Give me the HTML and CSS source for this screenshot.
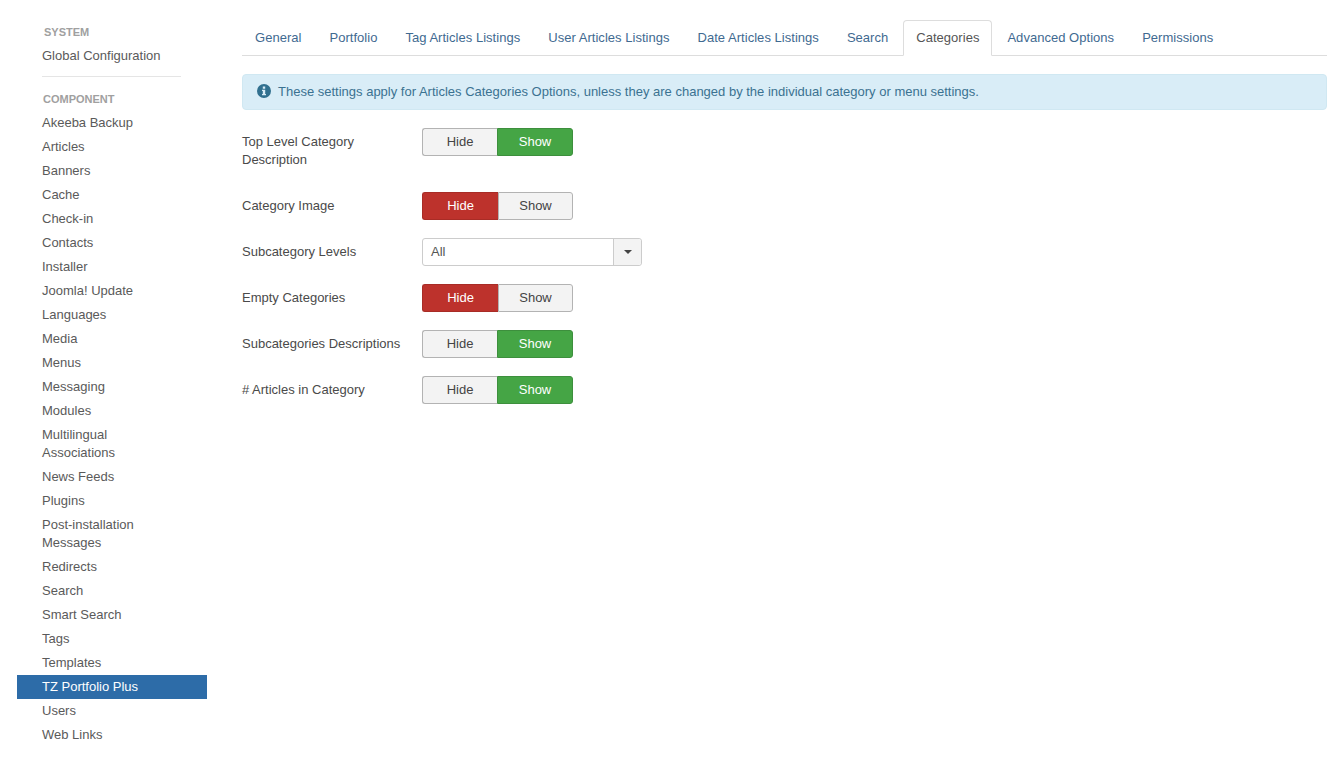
FILE: index.html
```html
<!DOCTYPE html>
<html>
<head>
	<title>Categories</title>
	<link rel="stylesheet" href="styles.css">
</head>
<body>
	<div class="page">
		<div class="sidebar">
			<ul class="menu">
				<li class="menu-head head-system">System</li>
				<li><a href="#">Global Configuration</a></li>
				<li class="divider"></li>
				<li class="menu-head">Component</li>
				<li><a href="#">Akeeba Backup</a></li>
				<li><a href="#">Articles</a></li>
				<li><a href="#">Banners</a></li>
				<li><a href="#">Cache</a></li>
				<li><a href="#">Check-in</a></li>
				<li><a href="#">Contacts</a></li>
				<li><a href="#">Installer</a></li>
				<li><a href="#">Joomla! Update</a></li>
				<li><a href="#">Languages</a></li>
				<li><a href="#">Media</a></li>
				<li><a href="#">Menus</a></li>
				<li><a href="#">Messaging</a></li>
				<li><a href="#">Modules</a></li>
				<li><a href="#">Multilingual<br>Associations</a></li>
				<li><a href="#">News Feeds</a></li>
				<li><a href="#">Plugins</a></li>
				<li><a href="#">Post-installation<br>Messages</a></li>
				<li><a href="#">Redirects</a></li>
				<li><a href="#">Search</a></li>
				<li><a href="#">Smart Search</a></li>
				<li><a href="#">Tags</a></li>
				<li><a href="#">Templates</a></li>
				<li class="active"><a href="#">TZ Portfolio Plus</a></li>
				<li><a href="#">Users</a></li>
				<li><a href="#">Web Links</a></li>
			</ul>
		</div>

		<div class="content">
			<ul class="tabs">
				<li><a href="#">General</a></li>
				<li><a href="#">Portfolio</a></li>
				<li><a href="#">Tag Articles Listings</a></li>
				<li><a href="#">User Articles Listings</a></li>
				<li><a href="#">Date Articles Listings</a></li>
				<li><a href="#">Search</a></li>
				<li class="active"><a href="#">Categories</a></li>
				<li><a href="#">Advanced Options</a></li>
				<li><a href="#">Permissions</a></li>
			</ul>

			<div class="alert">
				<svg class="alert-icon" width="14" height="14" viewBox="0 0 14 14">
					<path fill="#31708f" fill-rule="evenodd" d="M7 0a7 7 0 1 1 0 14A7 7 0 0 1 7 0zM5.8 2.6v2.1h2.4V2.6zM5 5.8v1.2h.8v3H5v1.3h4V10h-.8V5.8z"/>
				</svg>
				These settings apply for Articles Categories Options, unless they are changed by the individual category or menu settings.
			</div>

			<div class="row">
				<label class="row-label">Top Level Category<br>Description</label>
				<div class="toggle">
					<span class="btn">Hide</span>
					<span class="btn on-green">Show</span>
				</div>
			</div>
			<div class="row">
				<label class="row-label">Category Image</label>
				<div class="toggle">
					<span class="btn on-red">Hide</span>
					<span class="btn">Show</span>
				</div>
			</div>
			<div class="row">
				<label class="row-label">Subcategory Levels</label>
				<div class="select">
					<span class="select-value">All</span>
					<span class="select-arrow"><b></b></span>
				</div>
			</div>
			<div class="row">
				<label class="row-label">Empty Categories</label>
				<div class="toggle">
					<span class="btn on-red">Hide</span>
					<span class="btn">Show</span>
				</div>
			</div>
			<div class="row">
				<label class="row-label">Subcategories Descriptions</label>
				<div class="toggle">
					<span class="btn">Hide</span>
					<span class="btn on-green">Show</span>
				</div>
			</div>
			<div class="row">
				<label class="row-label"># Articles in Category</label>
				<div class="toggle">
					<span class="btn">Hide</span>
					<span class="btn on-green">Show</span>
				</div>
			</div>
		</div>
	</div>
</body>
</html>
```

FILE: styles.css
```css
body{
	margin: 0;
	background: #fff;
	font-family: "Liberation Sans", Arial, sans-serif;
	font-size: 13px;
	line-height: 18px;
	color: #515151;
}

a{
	text-decoration: none;
}

.page{
	display: flex;
	align-items: flex-start;
	padding: 20px 16px 0 17px;
}

/* sidebar */
.sidebar{
	width: 190px;
	flex: none;
	margin-right: 35px;
}

.menu{
	list-style: none;
	margin: 0;
	padding: 0;
}

.menu li a{
	display: block;
	padding: 3px 10px 3px 25px;
	color: #5a5a5a;
}

.menu li.active a{
	background: #2d6ca8;
	color: #fff;
}

.menu-head{
	padding: 3px 0 3px 26px;
	font-size: 11px;
	font-weight: bold;
	text-transform: uppercase;
	color: #a0a0a0;
}

.head-system{
	padding-left: 27px;
}

.divider{
	width: 139px;
	height: 1px;
	margin: 8px 0 10px 25px;
	background: #e5e5e5;
}

/* tabs */
.content{
	flex: 1;
}

.tabs{
	display: flex;
	list-style: none;
	margin: 0 0 18px;
	padding: 0;
	border-bottom: 1px solid #ddd;
}

.tabs li{
	margin: 0 2px -1px 0;
}

.tabs a{
	display: block;
	padding: 8px 12px;
	border: 1px solid transparent;
	border-radius: 4px 4px 0 0;
	color: #3f6a91;
	letter-spacing: .03px;
}

.tabs .active a{
	border-color: #ddd #ddd #fff;
	background: #fff;
	color: #555;
}

/* alert */
.alert{
	display: flex;
	align-items: center;
	height: 34px;
	margin-bottom: 18px;
	padding-left: 14px;
	border: 1px solid #d0e8f2;
	border-radius: 4px;
	background: #d9edf7;
	color: #3b7291;
}

.alert-icon{
	margin: -2px 7px 0 0;
}

/* form rows */
.row{
	display: flex;
	align-items: flex-start;
	margin-bottom: 18px;
}

.row-label{
	width: 180px;
	flex: none;
	padding: 5px 0;
	color: #4a4a4a;
}

.toggle{
	display: flex;
}

.btn{
	width: 74px;
	height: 26px;
	border: 1px solid #b3b3b3;
	background: #f3f3f3;
	color: #444;
	line-height: 26px;
	text-align: center;
}

.btn:first-child{
	border-radius: 3px 0 0 3px;
	border-right: 0;
}

.btn:last-child{
	border-radius: 0 3px 3px 0;
}

.btn.on-green{
	border-color: #3d8f3d;
	background: #45a545;
	color: #fff;
}

.btn.on-red{
	width: 75px;
	border-color: #a82c26;
	background: #bd322c;
	color: #fff;
}

.btn.on-red + .btn{
	width: 73px;
}

.select{
	display: flex;
	width: 218px;
	height: 26px;
	border: 1px solid #ccc;
	border-radius: 3px;
	line-height: 26px;
	color: #555;
}

.select-value{
	flex: 1;
	padding-left: 8px;
}

.select-arrow{
	display: flex;
	align-items: center;
	justify-content: center;
	width: 27px;
	border-left: 1px solid #ccc;
	border-radius: 0 3px 3px 0;
	background: #f3f3f3;
}

.select-arrow b{
	border-top: 4px solid #444;
	border-left: 4px solid transparent;
	border-right: 4px solid transparent;
}
```
